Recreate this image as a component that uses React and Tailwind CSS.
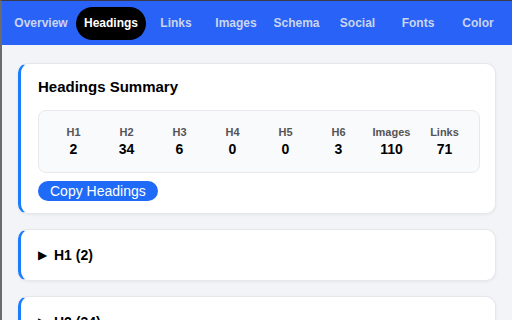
const tabs = [
    ["Overview", "w-[70px]"],
    ["Headings", "w-[70px]"],
    ["Links", "w-[60px]"],
    ["Images", "w-[60px]"],
    ["Schema", "w-[61px]"],
    ["Social", "w-[61px]"],
    ["Fonts", "w-[60px]"],
    ["Color", "w-[60px]"],
];

const stats = [
    ["H1", 2],
    ["H2", 34],
    ["H3", 6],
    ["H4", 0],
    ["H5", 0],
    ["H6", 3],
    ["Images", 110],
    ["Links", 71],
];

function Section({ title }) {
    return (
        <div className="bg-white rounded-[10px] border-l-[3px] border-l-[#1a7cff] border-y border-r border-[#e5e7eb] shadow-[0_1px_3px_rgba(0,0,0,0.06)] h-[52px] flex items-center px-[17px] shrink-0">
            <span className="text-[12px] mr-[7px] text-black">▶</span>
            <span className="text-[14px] font-bold text-black">{title}</span>
        </div>
    );
}

export default function App() {
    return (
        <div
            className="w-[512px] h-[320px] overflow-hidden flex flex-col bg-[#f3f4f7] border-l-2 border-l-[#6b6b6b] border-t border-t-[#3a3a4a]"
            style={{ fontFamily: '"Liberation Sans", Arial, sans-serif' }}
        >
            {/* Tab bar */}
            <header className="bg-[#2962f6] h-[44px] flex items-center pl-[4px] shrink-0">
                {tabs.map(([t, w]) =>
                    t === "Headings" ? (
                        <span
                            key={t}
                            className={`${w} bg-black text-white rounded-full h-[33px] flex items-center justify-center text-[12px] font-bold`}
                        >
                            {t}
                        </span>
                    ) : (
                        <span key={t} className={`${w} text-center text-[#cad5ee] text-[12px] font-bold`}>
                            {t}
                        </span>
                    )
                )}
            </header>

            {/* Content */}
            <main className="flex flex-col gap-[15px] px-[16px] pt-[18px]">
                <div className="bg-white rounded-[10px] border-l-[3px] border-l-[#1a7cff] border-y border-r border-[#e5e7eb] shadow-[0_1px_3px_rgba(0,0,0,0.06)] pl-[17px] pr-[15px] pt-[14px] pb-[12px] shrink-0">
                    <h2 className="text-[15px] font-bold text-black leading-[18px]">Headings Summary</h2>
                    <div className="mt-[14px] bg-[#f9fafb] border border-[#e8e9ec] rounded-[8px] h-[63px] grid grid-cols-8 items-center px-[8px]">
                        {stats.map(([label, value]) => (
                            <div key={label} className="flex flex-col items-center">
                                <span className="text-[11px] font-semibold text-[#555] leading-[12px]">{label}</span>
                                <span className="text-[14px] font-bold text-black leading-[17px] mt-[3px]">{value}</span>
                            </div>
                        ))}
                    </div>
                    <button className="mt-[8px] bg-[#1f6bf7] text-white text-[14px] rounded-full h-[20px] px-[12px] flex items-center leading-none">
                        Copy Headings
                    </button>
                </div>

                <Section title="H1 (2)" />
                <Section title="H2 (34)" />
            </main>
        </div>
    );
}
